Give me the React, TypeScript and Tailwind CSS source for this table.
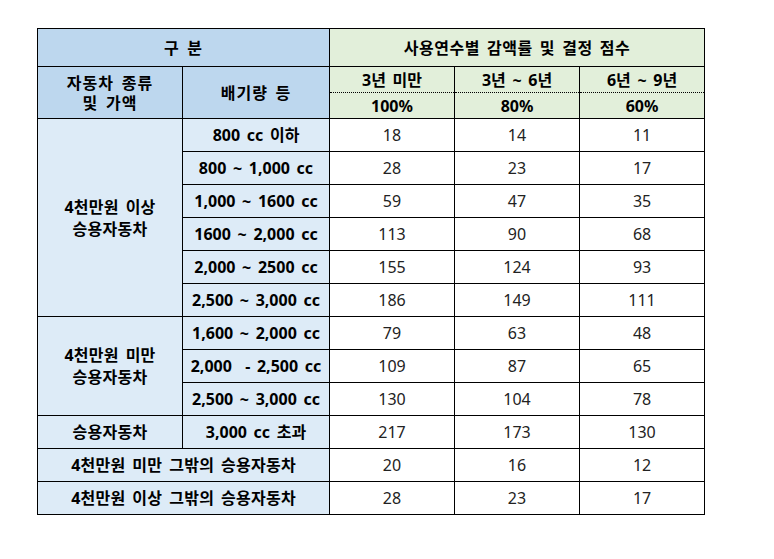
import React from 'react';

const font = { fontFamily: '"Noto Sans", "Noto Sans CJK KR", sans-serif' };

const rows = [
  { group: '4천만원 이상', span: 6, cc: '800 cc 이하', v: [18, 14, 11] },
  { cc: '800 ~ 1,000 cc', v: [28, 23, 17] },
  { cc: '1,000 ~ 1600 cc', v: [59, 47, 35] },
  { cc: '1600 ~ 2,000 cc', v: [113, 90, 68] },
  { cc: '2,000 ~ 2500 cc', v: [155, 124, 93] },
  { cc: '2,500 ~ 3,000 cc', v: [186, 149, 111] },
  { group: '4천만원 미만', span: 3, cc: '1,600 ~ 2,000 cc', v: [79, 63, 48] },
  { cc: '2,000\u00a0 - 2,500 cc', v: [109, 87, 65] },
  { cc: '2,500 ~ 3,000 cc', v: [130, 104, 78] },
];

const App = () => {
  const cell = 'border border-black text-center p-0';
  const num = `${cell} bg-white font-normal text-[16px] text-[#222]`;

  return (
    <div className="w-[774px] h-[559px] bg-white pt-[28px] pl-[37px]" style={font}>
      <table className="border-collapse table-fixed w-[667px] text-black text-[16px] font-bold [word-spacing:2.5px]">
        <colgroup>
          <col className="w-[145px]" />
          <col className="w-[147px]" />
          <col className="w-[125px]" />
          <col className="w-[125px]" />
          <col className="w-[125px]" />
        </colgroup>
        <thead>
          <tr className="h-[38px]">
            <th colSpan={2} className={`${cell} bg-[#bdd7ee] font-bold tracking-[1px]`}>
              구 분
            </th>
            <th colSpan={3} className={`${cell} bg-[#e2efda] font-bold tracking-[0.5px]`}>
              사용연수별 감액률 및 결정 점수
            </th>
          </tr>
          <tr className="h-[26px]">
            <th rowSpan={2} className={`${cell} bg-[#bdd7ee] font-bold leading-[20px] tracking-[1px]`}>
              자동차 종류
              <br />및 가액
            </th>
            <th rowSpan={2} className={`${cell} bg-[#bdd7ee] font-bold tracking-[1px]`}>
              배기량 등
            </th>
            <th className={`${cell} bg-[#e2efda] font-bold [border-bottom-style:dotted]`}>3년 미만</th>
            <th className={`${cell} bg-[#e2efda] font-bold [border-bottom-style:dotted]`}>3년 ~ 6년</th>
            <th className={`${cell} bg-[#e2efda] font-bold [border-bottom-style:dotted]`}>6년 ~ 9년</th>
          </tr>
          <tr className="h-[26px]">
            <th className={`${cell} bg-[#e2efda] font-bold [border-top-style:dotted]`}>100%</th>
            <th className={`${cell} bg-[#e2efda] font-bold [border-top-style:dotted]`}>80%</th>
            <th className={`${cell} bg-[#e2efda] font-bold [border-top-style:dotted]`}>60%</th>
          </tr>
        </thead>
        <tbody>
          {rows.map((r) => (
            <tr key={r.cc + r.v[0]} className="h-[33px]">
              {r.group && (
                <td rowSpan={r.span} className={`${cell} bg-[#ddebf7] leading-[22px] tracking-[0.25px]`}>
                  {r.group}
                  <br />
                  승용자동차
                </td>
              )}
              <td className={`${cell} bg-[#ddebf7]`}>{r.cc}</td>
              {r.v.map((n, i) => (
                <td key={i} className={num}>
                  {n}
                </td>
              ))}
            </tr>
          ))}
          <tr className="h-[33px]">
            <td className={`${cell} bg-[#ddebf7] tracking-[0.25px]`}>승용자동차</td>
            <td className={`${cell} bg-[#ddebf7]`}>3,000 cc 초과</td>
            <td className={num}>217</td>
            <td className={num}>173</td>
            <td className={num}>130</td>
          </tr>
          <tr className="h-[33px]">
            <td colSpan={2} className={`${cell} bg-[#ddebf7] tracking-[0.25px]`}>
              4천만원 미만 그밖의 승용자동차
            </td>
            <td className={num}>20</td>
            <td className={num}>16</td>
            <td className={num}>12</td>
          </tr>
          <tr className="h-[33px]">
            <td colSpan={2} className={`${cell} bg-[#ddebf7] tracking-[0.25px]`}>
              4천만원 이상 그밖의 승용자동차
            </td>
            <td className={num}>28</td>
            <td className={num}>23</td>
            <td className={num}>17</td>
          </tr>
        </tbody>
      </table>
    </div>
  );
};

export default App;
